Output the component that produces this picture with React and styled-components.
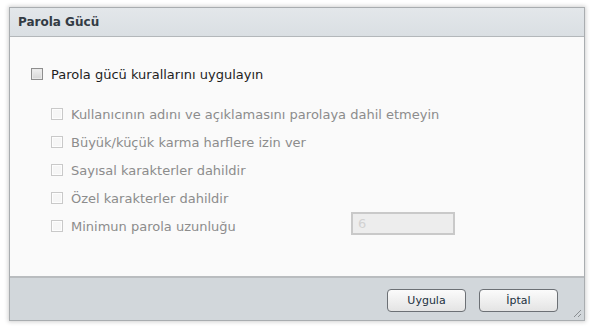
import React from 'react';
import styled, { createGlobalStyle } from 'styled-components';

const Global = createGlobalStyle`
    html, body {
        margin: 0;
        padding: 0;
        background: #ffffff;
    }
    body {
        font-family: 'DejaVu Sans', Verdana, sans-serif;
    }
`

const Page = styled.div`
    width: 592px;
    height: 328px;
    padding: 7px 0 0 9px;
    box-sizing: border-box;
`

const Window = styled.div`
    width: 576px;
    height: 314px;
    display: flex;
    flex-direction: column;
    border: 1px solid #a9adb0;
    box-sizing: border-box;
    box-shadow: 0 0 4px 1px rgba(0, 0, 0, 0.18);
    background: #fafafa;
`

const Header = styled.div`
    height: 28px;
    flex: none;
    display: flex;
    align-items: center;
    padding-left: 8px;
    background: linear-gradient(#e3e7ea, #dadfe3);
    border-bottom: 1px solid #b3b7ba;
    font-size: 12px;
    font-weight: bold;
    color: #333b44;
`

const Body = styled.div`
    flex: 1;
    display: flex;
    flex-direction: column;
    padding: 23px 0 0 21px;
    border-bottom: 2px solid #b9bcbf;
`

const Row = styled.label`
    display: flex;
    align-items: center;
    height: 28px;
    padding-left: ${p => p.$sub ? '20px' : '0'};
    margin-bottom: ${p => p.$main ? '12px' : '0'};
    font-size: 13px;
    color: ${p => p.$sub ? '#8c8c8c' : '#1e1e1e'};
`

const Box = styled.span`
    width: 12px;
    height: 12px;
    flex: none;
    box-sizing: border-box;
    margin-right: 8px;
    border: 1px solid ${p => p.$sub ? '#c9c9c9' : '#8e8e8e'};
    background: ${p => p.$sub ? '#f6f6f6' : 'linear-gradient(#f0f0f0, #d6d6d6)'};
    box-shadow: inset 0 0 0 1px ${p => p.$sub ? '#fdfdfd' : '#e9e9e9'};
`

const Label = styled.span`
    width: ${p => p.$w || 'auto'};
    white-space: nowrap;
`

const NumInput = styled.div`
    width: 104px;
    height: 23px;
    margin-bottom: 6px;
    box-sizing: border-box;
    border: 2px solid #c9c9c9;
    background: #ededed;
    color: #d2d2d2;
    font-size: 13px;
    display: flex;
    align-items: center;
    padding-left: 5px;
`

const Footer = styled.div`
    height: 42px;
    flex: none;
    display: flex;
    align-items: center;
    justify-content: flex-end;
    gap: 13px;
    padding-right: 26px;
    background: #d2d7db;
    position: relative;
`

const Button = styled.button`
    width: 79px;
    height: 23px;
    box-sizing: border-box;
    border: 1px solid #6c7075;
    border-radius: 4px;
    background: linear-gradient(#fbfbfb, #e4e4e4);
    font-family: 'DejaVu Sans', Verdana, sans-serif;
    font-size: 11px;
    color: #22313f;
    padding: 0;
    margin-top: 2px;
`

const Grip = styled.svg`
    position: absolute;
    right: 2px;
    bottom: 2px;
`

const rules = [
    'Kullanıcının adını ve açıklamasını parolaya dahil etmeyin',
    'Büyük/küçük karma harflere izin ver',
    'Sayısal karakterler dahildir',
    'Özel karakterler dahildir',
]

export default function App() {
    return (
        <Page>
            <Global />
            <Window>
                <Header>Parola Gücü</Header>
                <Body>
                    <Row $main>
                        <Box />
                        <Label>Parola gücü kurallarını uygulayın</Label>
                    </Row>
                    {rules.map(r => (
                        <Row $sub key={r}>
                            <Box $sub />
                            <Label>{r}</Label>
                        </Row>
                    ))}
                    <Row $sub>
                        <Box $sub />
                        <Label $w="280px">Minimun parola uzunluğu</Label>
                        <NumInput>6</NumInput>
                    </Row>
                </Body>
                <Footer>
                    <Button>Uygula</Button>
                    <Button>İptal</Button>
                    <Grip width="9" height="9" viewBox="0 0 9 9">
                        <path d="M8 1 L1 8 M8 5 L5 8" stroke="#8a8e92" strokeWidth="1" />
                    </Grip>
                </Footer>
            </Window>
        </Page>
    )
}
